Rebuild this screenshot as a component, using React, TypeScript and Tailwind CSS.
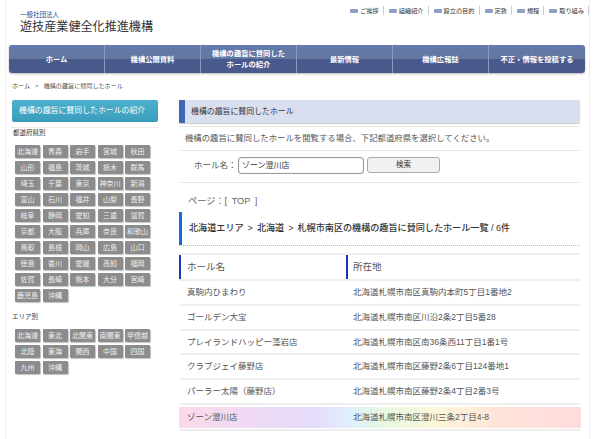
const font = "font-['Liberation_Sans','Noto_Sans_CJK_JP',sans-serif]";

const topLinks = ["ご挨拶", "組織紹介", "設立の目的", "定款", "規程", "取り組み"];
const navItems = ["ホーム", "機構公開資料", "機構の趣旨に賛同した\nホールの紹介", "最新情報", "機構広報誌", "不正・情報を投稿する"];
const prefectures = [
  "北海道", "青森", "岩手", "宮城", "秋田",
  "山形", "福島", "茨城", "栃木", "群馬",
  "埼玉", "千葉", "東京", "神奈川", "新潟",
  "富山", "石川", "福井", "山梨", "長野",
  "岐阜", "静岡", "愛知", "三重", "滋賀",
  "京都", "大阪", "兵庫", "奈良", "和歌山",
  "鳥取", "島根", "岡山", "広島", "山口",
  "徳島", "香川", "愛媛", "高知", "福岡",
  "佐賀", "長崎", "熊本", "大分", "宮崎",
  "鹿児島", "沖縄",
];
const areas = ["北海道", "東北", "北関東", "南関東", "甲信越", "北陸", "東海", "関西", "中国", "四国", "九州", "沖縄"];
const halls = [
  ["真駒内ひまわり", "北海道札幌市南区真駒内本町5丁目1番地2"],
  ["ゴールデン大宝", "北海道札幌市南区川沿2条2丁目5番28"],
  ["プレイランドハッピー藻岩店", "北海道札幌市南区南36条西11丁目1番1号"],
  ["クラブジェイ藤野店", "北海道札幌市南区藤野2条6丁目124番地1"],
  ["パーラー太陽（藤野店）", "北海道札幌市南区藤野2条4丁目2番3号"],
];

const AreaButtons = ({ items }: { items: string[] }) => (
  <div className="mt-[7px] ml-[3px] grid grid-cols-[repeat(5,25px)] gap-x-[2.5px] gap-y-[3px]">
    {items.map((p) => (
      <div
        key={p}
        className="h-[13px] bg-[#8c8c8c] shadow-[1px_1px_1px_#c4c4c4] rounded-[1px] text-[7px] leading-[13px] text-center text-[#eee] whitespace-nowrap"
      >
        {p}
      </div>
    ))}
  </div>
);

export default function App() {
  return (
    <div className={`${font} w-[600px] h-[439px] overflow-hidden bg-white`}>
      <div className="ml-[5px] w-[585px] h-full border-x border-[#efefef] relative text-[#444]">
        <header className="flex h-[45px]">
          <div className="ml-[14px] mt-[11px]">
            <p className="text-[6.5px] leading-[8px] text-[#2b4a94]">一般社団法人</p>
            <p className="text-[12.1px] leading-[17px] text-[#333] whitespace-nowrap">遊技産業健全化推進機構</p>
          </div>
          <ul className="ml-auto mt-[6px] flex h-[9px] items-center">
            {topLinks.map((t) => (
              <li key={t} className="flex items-center gap-[2px] border-r border-[#ccc] h-[9px] pl-[5px] pr-[4px] text-[6.2px] leading-[9px] text-[#333] whitespace-nowrap">
                <span className="w-[8px] h-[4px] rounded-[1px] bg-[#8f9fc9]" />
                {t}
              </li>
            ))}
          </ul>
        </header>

        <nav className="ml-[3px] w-[576px] h-[28px] grid grid-cols-6 rounded-[3px] overflow-hidden bg-[linear-gradient(#6379ac_0%,#63779f_50%,#48598d_50%,#4a5a8c_100%)] shadow-[0_1px_2px_#bbb]">
          {navItems.map((n) => (
            <div key={n} className="flex items-center justify-center border-r border-[#8d9abb] last:border-r-0 text-[7.3px] leading-[11px] font-bold text-white text-center whitespace-pre-line">
              {n}
            </div>
          ))}
        </nav>

        <p className="ml-[6px] mt-[9px] flex gap-[5px] text-[6.1px] leading-[8px] text-[#555]">
          <span>ホーム</span>
          <span>&gt;</span>
          <span>機構の趣旨に賛同したホール</span>
        </p>

        <div className="flex mt-[10px]">
          <aside className="ml-[6px] w-[146px] shrink-0">
            <h2 className="h-[22px] rounded-[2px] bg-[linear-gradient(#4cb1cd,#3b9dbc)] pl-[7px] text-[7.9px] leading-[22px] text-white whitespace-nowrap">
              機構の趣旨に賛同したホールの紹介
            </h2>
            <p className="mt-[5px] border-t border-dotted border-[#ddd] pl-[1px] text-[6.5px] leading-[10px] text-[#333]">都道府県別</p>
            <AreaButtons items={prefectures} />
            <p className="mt-[10px] text-[6.5px] leading-[10px] text-[#333]">エリア別</p>
            <AreaButtons items={areas} />
          </aside>

          <main className="ml-[21px] w-[401px] shrink-0">
            <h2 className="h-[23px] rounded-[1px] border-l-[6px] border-[#3e66b5] bg-[#d9dfee] shadow-[0_1px_1px_#ccc] pl-[6px] text-[7.9px] leading-[23px] text-[#333]">
              機構の趣旨に賛同したホール
            </h2>
            <p className="mt-[3px] border-y border-[#e8e8e8] pl-[6px] h-[25px] text-[8.4px] leading-[23px] text-[#555] whitespace-nowrap">
              機構の趣旨に賛同したホールを閲覧する場合、下記都道府県を選択してください。
            </p>
            <div className="flex items-center h-[32px] border-b border-[#e8e8e8] pl-[15px] pb-[3px]">
              <span className="w-[44px] text-[8.5px] text-[#555] whitespace-nowrap">ホール名：</span>
              <div className="w-[126px] h-[17px] rounded-[3px] border border-[#999] shadow-[inset_0_0_1px_#aaa] pl-[3px] text-[8px] leading-[15px] text-[#333]">ゾーン澄川店</div>
              <div className="ml-[3px] w-[73px] h-[16px] rounded-[3px] border border-[#aaa] bg-[#f1f1f1] text-[7.5px] leading-[14px] text-center text-[#333]">検索</div>
            </div>
            <p className="mt-[12px] pl-[9px] text-[9.2px] leading-[13px] text-[#666] whitespace-pre [word-spacing:2px]">ページ：[ TOP ]</p>
            <h3 className="mt-[4px] h-[33px] border-l-[3px] border-[#1668e0] pl-[7px] text-[9.1px] leading-[33px] font-medium text-[#333] whitespace-nowrap">
              北海道エリア<span className="mx-[4px]">&gt;</span>北海道<span className="mx-[4px]">&gt;</span>札幌市南区の機構の趣旨に賛同したホール一覧 / 6件
            </h3>

            <div className="border-t border-dotted border-[#bbb]" />
            <div className="mt-[7px] grid grid-cols-[167px_1fr] h-[28px] border-y-2 border-[#eee] text-[9.5px] leading-[24px] text-[#555]">
              <div className="border-l-2 border-[#1c35b5] pl-[6px]">ホール名</div>
              <div className="border-l-2 border-[#1c35b5] pl-[5px]">所在地</div>
            </div>
            {halls.map(([name, addr]) => (
              <div key={name} className="ml-px grid grid-cols-[166px_1fr] h-[24.75px] border-b-2 border-[#eee] text-[8.5px] leading-[23px] text-[#555] whitespace-nowrap">
                <div className="pl-[7px]">{name}</div>
                <div className="pl-[7px]">{addr}</div>
              </div>
            ))}
            <div className="mt-[2px] grid grid-cols-[167px_1fr] w-[402px] h-[21px] bg-[linear-gradient(90deg,#fbd9ea_0%,#e4dcfb_34%,#dff0fb_43%,#e8f9e0_52%,#fdf6d9_64%,#ffe3d9_80%,#ffdcdc_100%)] text-[8.5px] leading-[20px] text-[#555]">
              <div className="pl-[8px]">ゾーン澄川店</div>
              <div className="pl-[7px]">北海道札幌市南区澄川三条2丁目4-8</div>
            </div>
            <div className="ml-px mt-[1px] border-b-2 border-[#eee]" />
          </main>
        </div>
      </div>
    </div>
  );
}
